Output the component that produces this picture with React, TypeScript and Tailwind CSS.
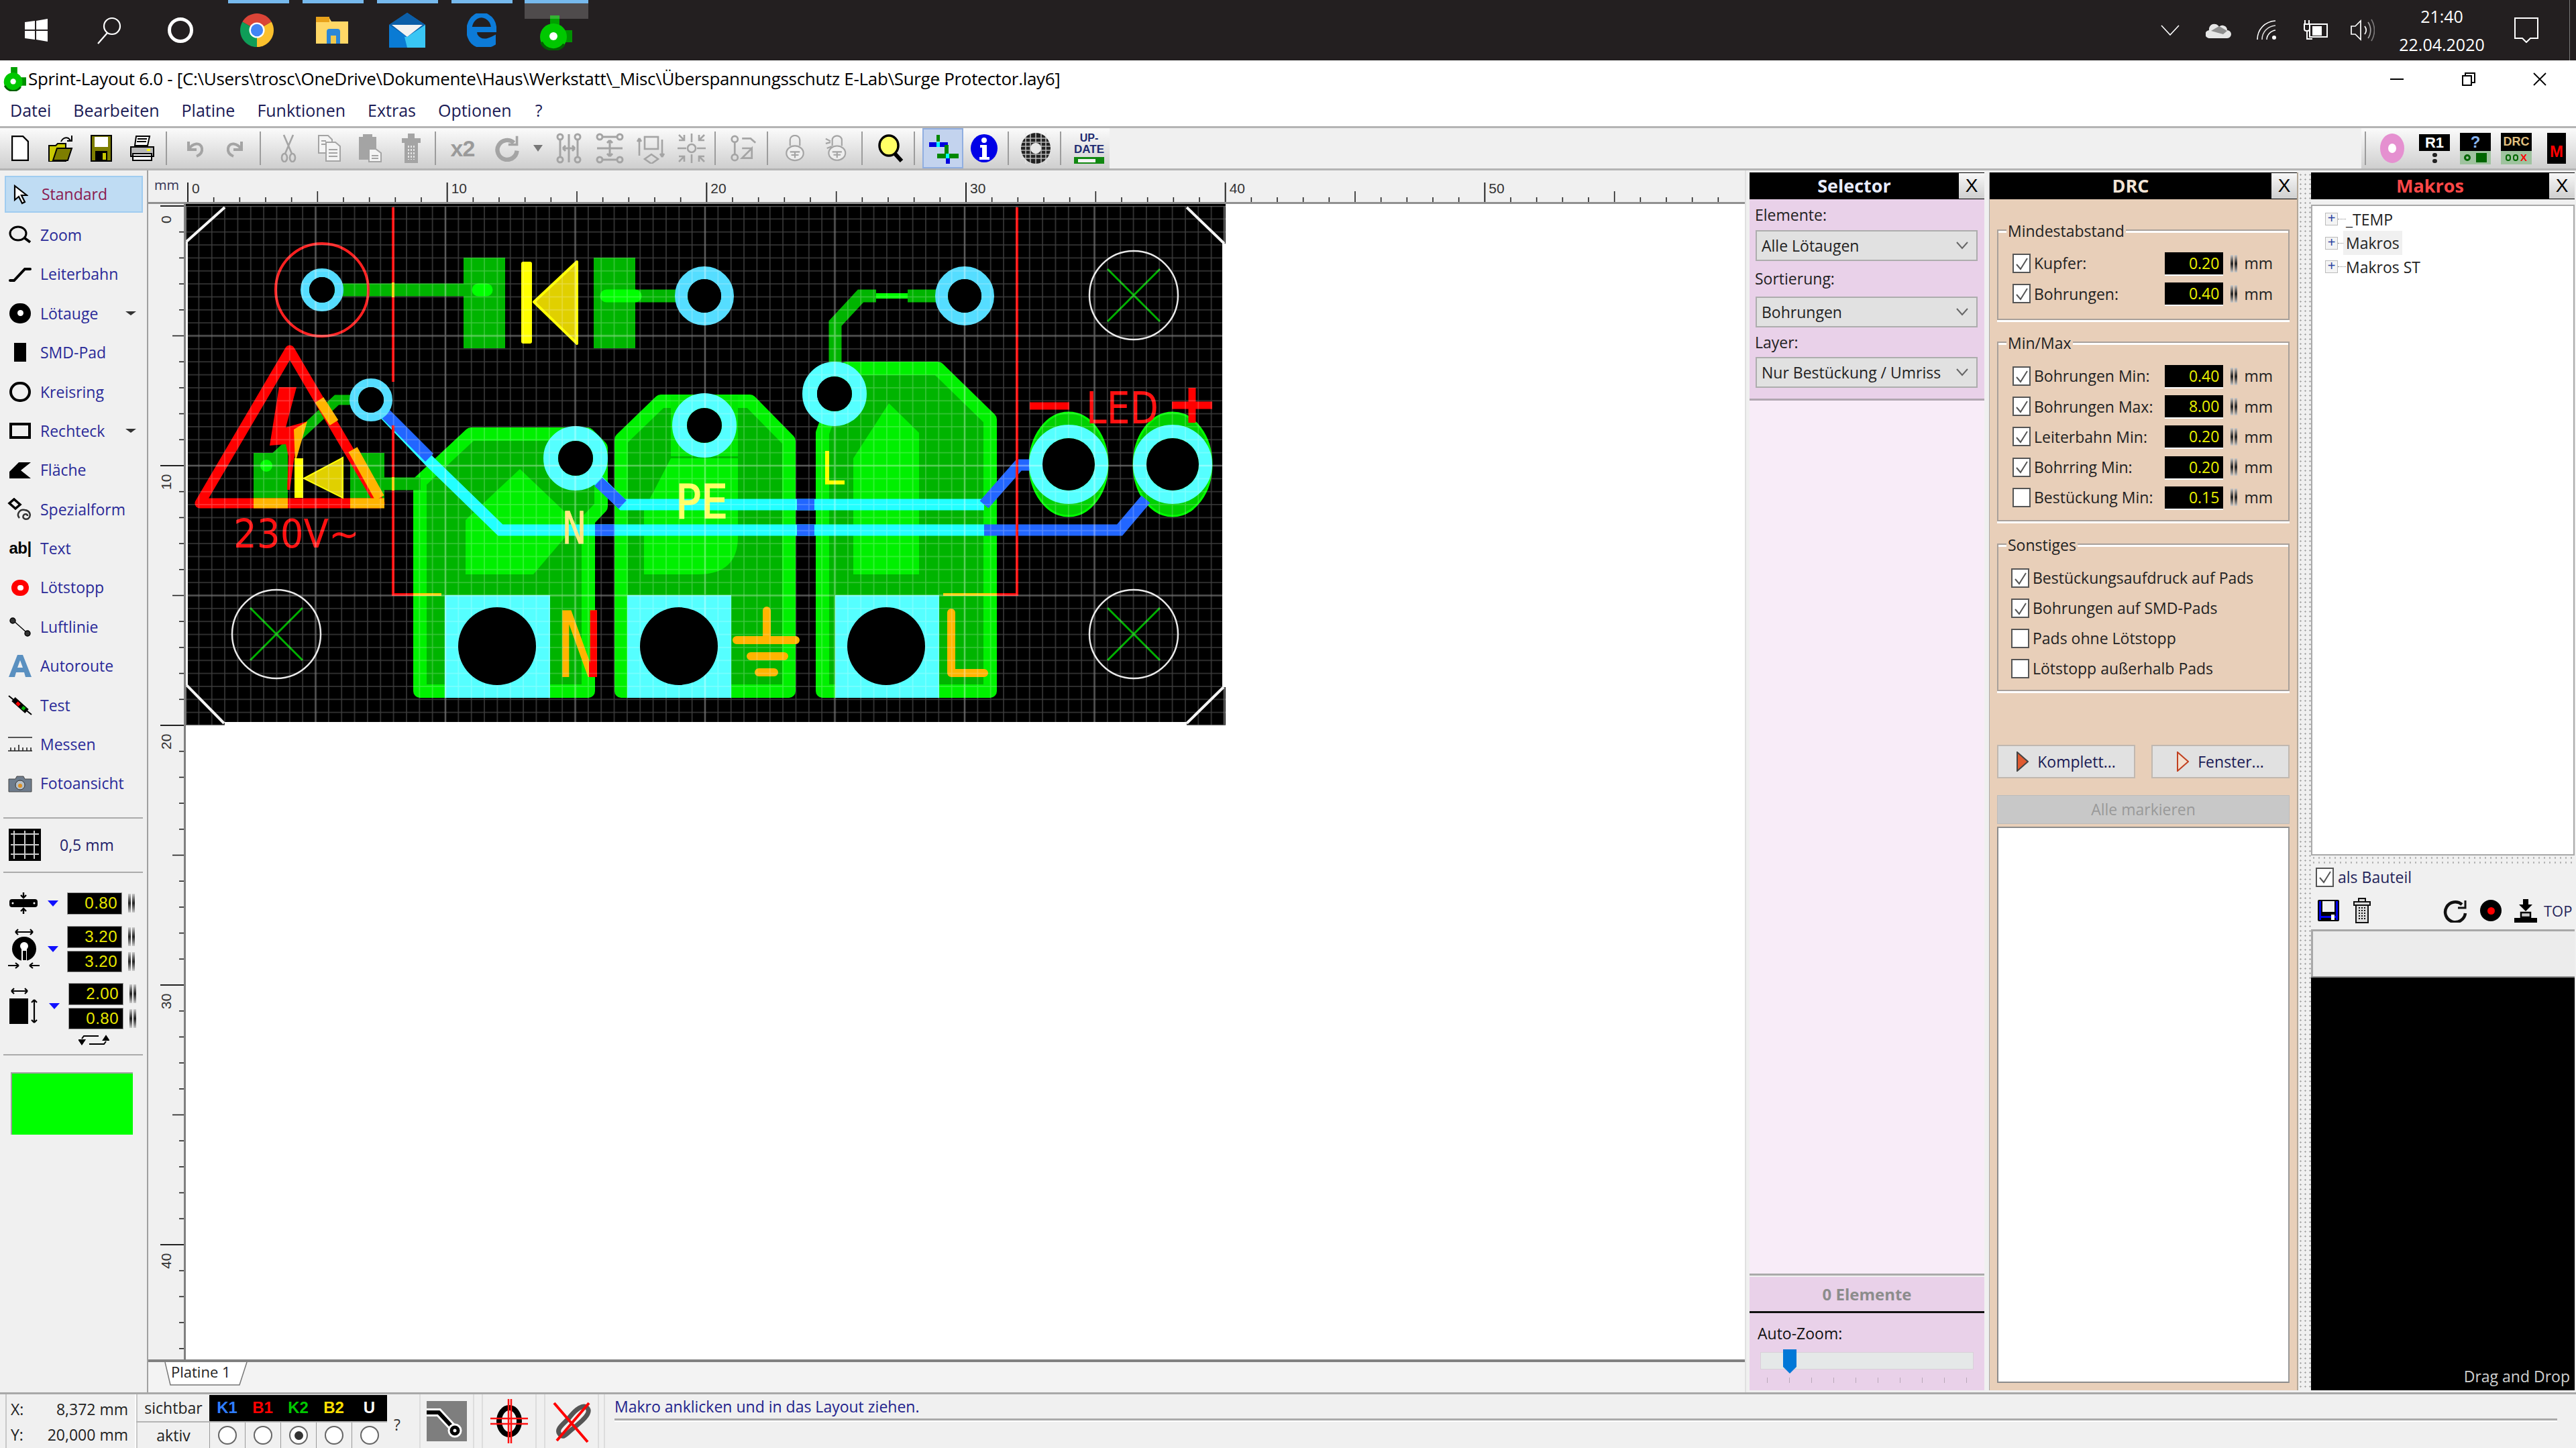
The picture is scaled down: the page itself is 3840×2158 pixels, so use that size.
import React from "react";

const ticksX = Array.from({ length: 60 }, (_, i) => i);
const ticksY = Array.from({ length: 45 }, (_, i) => i);
const MM = 38.7;

function Logo({ cls }: { cls: string }) {
  return (
    <svg viewBox="0 0 52 52" className={cls}>
      <rect x="19" y="0" width="14" height="16" fill="#00a000" />
      <rect x="36" y="22" width="16" height="18" fill="#009000" />
      <circle cx="24" cy="32" r="20" fill="#00c800" />
      <path d="M6 40a20 20 0 0 0 34 3" fill="none" stroke="#006000" strokeWidth="4" />
      <circle cx="24" cy="31" r="6" fill="#fff" />
    </svg>
  );
}

function Taskbar() {
  return (
    <div className="h-[90px] shrink-0 bg-[#231f20] flex items-center relative text-white">
      <div className="w-[108px] flex justify-center">
        <svg viewBox="0 0 34 34" className="w-[34px] h-[34px]" fill="#fff">
          <path d="M0 5l15-2v13H0zM17 3l17-3v16H17zM0 18h15v13L0 29zM17 18h17v16l-17-3z" />
        </svg>
      </div>
      <div className="w-[107px] flex justify-center">
        <svg viewBox="0 0 44 44" className="w-[44px] h-[44px]" fill="none" stroke="#fff" strokeWidth="2.2">
          <circle cx="27" cy="16" r="12" />
          <path d="M20 26L6 42" />
        </svg>
      </div>
      <div className="w-[108px] flex justify-center">
        <div className="w-[38px] h-[38px] rounded-full border-[5px] border-white" />
      </div>
      <div className="w-[113px] ml-[3px] flex justify-center">
        <svg viewBox="-26 -26 52 52" className="w-[50px] h-[50px]">
          <path d="M0 0L-22.5 -13A26 26 0 0 1 22.5 -13Z" fill="#db4437" />
          <path d="M0 0L22.5 -13A26 26 0 0 1 0 26Z" fill="#fbc02d" />
          <path d="M0 0L0 26A26 26 0 0 1 -22.5 -13Z" fill="#0f9d58" />
          <circle r="12" fill="#fff" />
          <circle r="9.5" fill="#4285f4" />
        </svg>
      </div>
      <div className="w-[112px] flex justify-center">
        <svg viewBox="0 0 48 40" className="w-[48px] h-[40px]">
          <path d="M0 2h20l3 5h25v33H0z" fill="#ffd766" />
          <path d="M0 0h20v8H0z" fill="#e8a21b" />
          <path d="M16 40V22a4 4 0 0 1 4-4h12a4 4 0 0 1 4 4v18h-6V28H22v12z" fill="#2b87d8" />
          <rect x="22" y="28" width="8" height="12" fill="#f2c94c" />
        </svg>
      </div>
      <div className="w-[111px] flex justify-center">
        <svg viewBox="0 0 54 52" className="w-[54px] h-[52px]">
          <path d="M0 18L27 0l27 18v34H0z" fill="#0a7bd4" />
          <path d="M0 18L27 0l27 18-27 18z" fill="#0b5ea8" />
          <path d="M4 18h46L27 36z" fill="#f2f2f2" />
          <path d="M54 52H27l-4-16 4 0 27-18z" fill="#39c6f4" />
        </svg>
      </div>
      <div className="w-[112px] flex justify-center">
        <svg viewBox="0 0 44 50" className="w-[44px] h-[50px]" fill="none">
          <path d="M6 24H40V20C38 6 24-2 13 5 4 11 1 24 5 35c5 14 22 16 34 9v-6c-10 5-21 5-27-5-1-3-1-6-1-9" stroke="#0c7bd8" strokeWidth="8" />
        </svg>
      </div>
      <div className="w-[105px] flex justify-center">
        <Logo cls="w-[52px] h-[52px] mt-[8px]" />
      </div>

      <div className="absolute left-[340px] top-0 w-[91px] h-[5px] bg-[#76b9ed]" />
      <div className="absolute left-[451px] top-0 w-[91px] h-[5px] bg-[#76b9ed]" />
      <div className="absolute left-[562px] top-0 w-[91px] h-[5px] bg-[#76b9ed]" />
      <div className="absolute left-[673px] top-0 w-[91px] h-[5px] bg-[#76b9ed]" />
      <div className="absolute left-[782px] top-0 w-[95px] h-[5px] bg-[#76b9ed]" />
      <div className="absolute left-[782px] top-[5px] w-[95px] h-[23px] bg-[#ffffff] opacity-20" />

      <div className="ml-auto flex items-center">
        <svg viewBox="0 0 28 16" className="w-[28px] h-[16px] mr-[39px]" fill="none" stroke="#fff" strokeWidth="1.6">
          <path d="M1 1l13 14L27 1" />
        </svg>
        <svg viewBox="0 0 38 24" className="w-[38px] h-[24px] mr-[38px]">
          <path d="M6 24a6 6 0 0 1-1-12 8 8 0 0 1 15-5 7 7 0 0 1 12 5 6 6 0 0 1 0 12z" fill="#e6e6e6" />
          <path d="M8 13L20 6l12 7-6 5z" fill="#8e8e8e" />
        </svg>
        <svg viewBox="0 0 30 30" className="w-[30px] h-[30px] mr-[40px]" fill="none" stroke="#fff" strokeWidth="1.6">
          <path d="M1 29C1 14 12 2 28 1" />
          <path d="M8 29C8 18 16 9 28 8" opacity=".85" />
          <path d="M15 29c0-7 6-13 13-14" />
          <circle cx="26" cy="26" r="3" fill="#fff" stroke="none" />
        </svg>
        <svg viewBox="0 0 36 30" className="w-[36px] h-[30px] mr-[34px]" fill="none" stroke="#fff" strokeWidth="2">
          <rect x="9" y="6" width="26" height="19" />
          <rect x="14" y="10" width="12" height="12" fill="#fff" />
          <path d="M2 0v6M8 0v6M1 6h8v7a3 3 0 0 1-3 3H4a3 3 0 0 1-3-3zM5 16v12h8" />
        </svg>
        <svg viewBox="0 0 36 36" className="w-[36px] h-[36px] mr-[32px]" fill="none" stroke="#fff" strokeWidth="1.7">
          <path d="M1 12h6l8-8v28l-8-8H1z" />
          <path d="M21 12c3 4 3 8 0 12" />
          <path d="M26 6c5 7 5 17 0 24" opacity=".6" />
          <path d="M31 2c6 10 6 22 0 32" opacity=".4" />
        </svg>
        <div className="w-[136px] flex flex-col items-center text-[25px] leading-[42px] font-['Open_Sans',sans-serif]">
          <span>21:40</span>
          <span>22.04.2020</span>
        </div>
        <svg viewBox="0 0 36 38" className="w-[36px] h-[38px] ml-[40px] mr-[56px]" fill="none" stroke="#fff" strokeWidth="2">
          <path d="M1 1h34v30H24l-6 6-6-6H1z" />
        </svg>
      </div>
      <div className="absolute right-[9px] top-0 bottom-0 w-px bg-[#777]" />
    </div>
  );
}

function TitleBar() {
  return (
    <div className="h-[55px] shrink-0 bg-white flex items-center relative">
      <Logo cls="w-[36px] h-[36px] ml-[3px] mr-[3px]" />
      <span className="text-[26px] text-black whitespace-nowrap font-['Open_Sans',sans-serif] tracking-[-0.31px]">
        Sprint-Layout 6.0 - [C:\Users\trosc\OneDrive\Dokumente\Haus\Werkstatt\_Misc\Überspannungsschutz E-Lab\Surge Protector.lay6]
      </span>
      <div className="ml-auto flex items-center">
        <div className="w-[20px] h-[2px] bg-black mr-[87px]" />
        <svg viewBox="0 0 20 20" className="w-[20px] h-[20px] mr-[86px]" fill="none" stroke="#000" strokeWidth="2">
          <rect x="1" y="5" width="13" height="14" />
          <path d="M5 5V1h14v14h-5" />
        </svg>
        <svg viewBox="0 0 20 20" className="w-[20px] h-[20px] mr-[44px]" fill="none" stroke="#000" strokeWidth="1.8">
          <path d="M1 1l18 18M19 1L1 19" />
        </svg>
      </div>
    </div>
  );
}

function MenuBar() {
  const items: [string, string][] = [
    ["Datei", "ml-[15px]"],
    ["Bearbeiten", "ml-[33px]"],
    ["Platine", "ml-[33px]"],
    ["Funktionen", "ml-[33px]"],
    ["Extras", "ml-[33px]"],
    ["Optionen", "ml-[33px]"],
    ["?", "ml-[35px]"],
  ];
  return (
    <div className="h-[43px] shrink-0 bg-white flex items-center pb-[3px] text-[25px] text-[#1a1a55] font-['Open_Sans',sans-serif]">
      {items.map(([t, c]) => (
        <span key={t} className={c}>
          {t}
        </span>
      ))}
    </div>
  );
}

const Sep = ({ cls }: { cls: string }) => <div className={"w-[2px] h-[50px] bg-[#9c9c9c] shrink-0 " + cls} />;

function Cell({ children, cls = "w-[61px]" }: { children: React.ReactNode; cls?: string }) {
  return <div className={"h-full shrink-0 flex items-center justify-center " + cls}>{children}</div>;
}

const GRAY = "#a4a4a4";

function Toolbar() {
  return (
    <div className="h-[66px] shrink-0 bg-[#f0f0f0] border-y-[3px] border-y-[#b4b4b4] flex items-center">
      <div className="h-full flex items-center bg-linear-to-b from-[#fbfbfb] to-[#cfcfcf]">
        <Cell cls="w-[59px]">
          <svg viewBox="0 0 26 38" className="w-[26px] h-[38px]" fill="#fff" stroke="#000" strokeWidth="2.4">
            <path d="M1 1h16l8 8v28H1z" />
          </svg>
        </Cell>
        <Cell>
          <svg viewBox="0 0 38 40" className="w-[38px] h-[40px]">
            <path d="M2 16h10l3-3h12v27H2z" fill="#c8c800" stroke="#000" strokeWidth="2" />
            <path d="M8 38l6-18h22l-6 18z" fill="#7e7e00" stroke="#000" strokeWidth="2" />
            <path d="M20 10c2-5 7-7 11-5l3 3M36 1v8h-7" fill="none" stroke="#000" strokeWidth="2" />
          </svg>
        </Cell>
        <Cell>
          <svg viewBox="0 0 32 40" className="w-[32px] h-[40px]">
            <rect x="1" y="1" width="30" height="38" fill="#7e7e00" stroke="#000" strokeWidth="2" />
            <rect x="6" y="3" width="20" height="15" fill="#fff" />
            <rect x="7" y="24" width="18" height="15" fill="#000" />
            <rect x="18" y="27" width="5" height="10" fill="#c8c800" />
          </svg>
        </Cell>
        <Cell>
          <svg viewBox="0 0 38 40" className="w-[38px] h-[40px]" stroke="#000" strokeWidth="2">
            <path d="M10 2h20l-3 14H8z" fill="#fff" />
            <path d="M12 6h14M11 10h14" />
            <path d="M2 18h34v14H2z" fill="#b8b8b8" />
            <rect x="5" y="28" width="28" height="10" fill="#fff" />
            <path d="M5 32h28" />
            <rect x="26" y="21" width="5" height="3" fill="#ff0" stroke="none" />
          </svg>
        </Cell>
        <Sep cls="ml-[5px] mr-[10px]" />
        <Cell>
          <svg viewBox="0 0 30 30" className="w-[30px] h-[30px]" fill="none" stroke={GRAY} strokeWidth="4">
            <path d="M6 5v12h12M6 17C12 7 24 5 26 15c1 6-3 10-8 12" />
          </svg>
        </Cell>
        <Cell>
          <svg viewBox="0 0 30 30" className="w-[30px] h-[30px]" fill="none" stroke={GRAY} strokeWidth="4">
            <path d="M24 5v12H12M24 17C18 7 6 5 4 15c-1 6 3 10 8 12" />
          </svg>
        </Cell>
        <Sep cls="ml-[6px] mr-[10px]" />
        <Cell>
          <svg viewBox="0 0 24 42" className="w-[24px] h-[42px]" fill="none" stroke={GRAY} strokeWidth="2.6">
            <path d="M5 1l12 28M19 1L7 29" />
            <ellipse cx="6" cy="35" rx="4" ry="6" />
            <ellipse cx="18" cy="35" rx="4" ry="6" />
          </svg>
        </Cell>
        <Cell>
          <svg viewBox="0 0 34 40" className="w-[34px] h-[40px]" fill="#f4f4f4" stroke={GRAY} strokeWidth="2">
            <path d="M1 1h14l6 6v20H1z" />
            <path d="M12 11h14l7 6v22H12z" />
            <path d="M16 22h13M16 27h13M16 32h13M5 9h7M5 14h6" />
          </svg>
        </Cell>
        <Cell>
          <svg viewBox="0 0 36 42" className="w-[36px] h-[42px]" stroke={GRAY} strokeWidth="2">
            <path d="M2 5h24v32H2z" fill={GRAY} />
            <path d="M8 1h12v7H8z" fill={GRAY} />
            <path d="M16 22h10l8 6v13H16z" fill="#f4f4f4" />
            <path d="M20 32h10M20 36h10" />
          </svg>
        </Cell>
        <Cell>
          <svg viewBox="0 0 28 44" className="w-[28px] h-[44px]" fill={GRAY} stroke={GRAY} strokeWidth="2">
            <path d="M10 1h8v5h-8zM1 8h26v5H1zM5 14h18v29H5z" />
            <path d="M10 18v21M14 18v21M18 18v21" stroke="#e4e4e4" strokeDasharray="3 2" />
          </svg>
        </Cell>
        <Sep cls="ml-[5px] mr-[9px]" />
        <Cell>
          <span className="text-[34px] font-bold text-[#9a9a9a] font-['Liberation_Sans',sans-serif] tracking-[-1px]">x2</span>
        </Cell>
        <Cell cls="w-[72px]">
          <svg viewBox="0 0 40 44" className="w-[38px] h-[40px]" fill="none" stroke={GRAY} strokeWidth="7">
            <path d="M31 13A16 16 0 1 0 36 26" />
            <path d="M36 2v14H22" strokeWidth="4" />
          </svg>
        </Cell>
        <Cell cls="w-[20px]">
          <div className="w-0 h-0 border-x-[7px] border-x-transparent border-t-[10px] border-t-[#777]" />
        </Cell>
        <Cell cls="w-[61px] ml-[5px]">
          <svg viewBox="0 0 42 46" className="w-[42px] h-[46px]" fill="none" stroke={GRAY} strokeWidth="3">
            <circle cx="8" cy="6" r="4" />
            <circle cx="8" cy="40" r="4" />
            <circle cx="34" cy="6" r="4" />
            <circle cx="34" cy="40" r="4" />
            <path d="M8 10v26M34 10v26M21 2v42M12 23h18M12 23l4-4M12 23l4 4M30 23l-4-4M30 23l-4 4" />
          </svg>
        </Cell>
        <Cell>
          <svg viewBox="0 0 42 46" className="w-[42px] h-[46px]" fill="none" stroke={GRAY} strokeWidth="3">
            <circle cx="6" cy="6" r="4" />
            <circle cx="36" cy="6" r="4" />
            <circle cx="6" cy="40" r="4" />
            <circle cx="36" cy="40" r="4" />
            <path d="M10 6h22M10 40h22M2 23h38M21 11v24M21 11l-4 4M21 11l4 4M21 35l-4-4M21 35l4-4" />
          </svg>
        </Cell>
        <Cell>
          <svg viewBox="0 0 42 46" className="w-[42px] h-[46px]" fill="none" stroke={GRAY} strokeWidth="2.6">
            <rect x="12" y="6" width="20" height="18" />
            <path d="M22 32l10 7-10 7-10-7zM4 8v26M4 8L1 13M4 8l3 5M38 10v26M38 36l-3-5M38 36l3-5" />
          </svg>
        </Cell>
        <Cell>
          <svg viewBox="0 0 44 46" className="w-[44px] h-[46px]" fill="none" stroke={GRAY} strokeWidth="2.6">
            <circle cx="22" cy="23" r="6" />
            <path d="M22 1v13M22 32v13M1 23h13M30 23h13M3 3l8 8M11 3v8H3M41 3l-8 8M33 3v8h8M3 43l8-8M11 43v-8H3M41 43l-8-8M33 43v-8h8" />
          </svg>
        </Cell>
        <Sep cls="ml-[4px] mr-[10px]" />
        <Cell>
          <svg viewBox="0 0 44 44" className="w-[40px] h-[40px]" fill="none" stroke={GRAY} strokeWidth="3">
            <circle cx="8" cy="7" r="5" />
            <circle cx="8" cy="37" r="5" />
            <path d="M8 12v20M20 22h16M36 22v16H20z" />
            <path d="M20 6h14l8 7" />
          </svg>
        </Cell>
        <Sep cls="ml-[5px] mr-[9px]" />
        <Cell>
          <svg viewBox="0 0 32 44" className="w-[30px] h-[40px]" fill="none" stroke={GRAY} strokeWidth="2.4">
            <path d="M8 18V8a8 7 0 0 1 16 0v10" />
            <ellipse cx="16" cy="30" rx="14" ry="12" fill="#eee" />
            <path d="M8 28h16M16 28v10M10 33h12" />
          </svg>
        </Cell>
        <Cell>
          <svg viewBox="0 0 36 44" className="w-[32px] h-[40px]" fill="none" stroke={GRAY} strokeWidth="2.4">
            <path d="M12 18V8a8 7 0 0 1 16 0v10M1 6l8 4M1 14l8-2M3 22l8-3" />
            <ellipse cx="20" cy="30" rx="14" ry="12" fill="#eee" />
            <path d="M12 28h16M20 28v10M14 33h12" />
          </svg>
        </Cell>
        <Sep cls="ml-[8px] mr-[11px]" />
        <Cell>
          <svg viewBox="0 0 42 42" className="w-[42px] h-[42px]">
            <ellipse cx="18" cy="17" rx="14" ry="15" fill="#ffff66" stroke="#000" strokeWidth="3.5" />
            <path d="M27 29l10 11" stroke="#000" strokeWidth="6" />
          </svg>
        </Cell>
        <Sep cls="ml-[4px] mr-[11px]" />
      </div>
      <div className="h-full w-[61px] shrink-0 flex items-center justify-center bg-[#c3d3ee] border-2 border-[#90aee0]">
        <svg viewBox="0 0 46 46" className="w-[46px] h-[46px]">
          <rect x="13" y="3" width="5" height="10" fill="#008800" />
          <rect x="2" y="14" width="28" height="7" fill="#0000e0" />
          <rect x="25" y="18" width="6" height="14" fill="#008800" />
          <rect x="14" y="31" width="32" height="7" fill="#008800" />
          <rect x="27" y="38" width="6" height="8" fill="#0000e0" />
          <rect x="13" y="14" width="5" height="7" fill="#00ffff" />
          <rect x="27" y="31" width="5" height="7" fill="#00ffff" />
        </svg>
      </div>
      <div className="h-full flex items-center bg-linear-to-b from-[#fbfbfb] to-[#cfcfcf]">
        <Cell>
          <svg viewBox="0 0 42 44" className="w-[42px] h-[44px]">
            <ellipse cx="21" cy="22" rx="20" ry="21" fill="#0000e6" />
            <circle cx="21" cy="10" r="4" fill="#fff" />
            <path d="M15 17h10v18h4v4H14v-4h4V21h-3z" fill="#fff" />
          </svg>
        </Cell>
        <Sep cls="ml-[5px] mr-[9px]" />
        <Cell>
          <svg viewBox="0 0 46 46" className="w-[46px] h-[46px]">
            <ellipse cx="23" cy="23" rx="22" ry="23" fill="#222" />
            <circle cx="23" cy="23" r="8" fill="#e8e8e8" />
            <path d="M1 8h44M1 14h44M1 20h44M1 26h44M1 32h44M1 38h44M8 0v46M15 0v46M23 0v46M31 0v46M38 0v46" stroke="#e8e8e8" strokeWidth="1.6" opacity=".75" />
          </svg>
        </Cell>
        <Sep cls="ml-[6px] mr-[11px]" />
        <Cell>
          <div className="flex flex-col items-center w-[45px] h-[48px] relative">
            <span className="text-[16px] leading-[17px] font-bold text-[#1d2a70] font-['Liberation_Sans',sans-serif]">UP-</span>
            <span className="text-[17px] leading-[17px] font-bold text-[#1d2a70] font-['Liberation_Sans',sans-serif]">DATE</span>
            <div className="w-[45px] h-[10px] mt-[3px] bg-[#118811] flex items-center pl-[6px]">
              <div className="w-[26px] h-[5px] bg-[#f4f4f4]" />
            </div>
          </div>
        </Cell>
      </div>
      <div className="flex-1" />
      <div className="h-full w-[320px] shrink-0 flex items-center bg-linear-to-b from-[#fbfbfb] to-[#cfcfcf] pl-[5px]">
        <Sep cls="" />
        <div className="w-[37px] flex justify-center ml-[20px]">
          <svg viewBox="0 0 36 44" className="w-[36px] h-[44px]">
            <ellipse cx="18" cy="22" rx="18" ry="22" fill="#e590d0" />
            <ellipse cx="18" cy="22" rx="6" ry="7" fill="#fff" />
          </svg>
        </div>
        <div className="w-[46px] ml-[22px] flex flex-col items-center">
          <div className="w-[46px] h-[25px] bg-black text-white text-[22px] leading-[25px] text-center font-bold font-['Liberation_Sans',sans-serif]">R1</div>
          <div className="flex flex-col gap-[3px] mt-[3px]">
            <div className="w-[7px] h-[6px] rounded-full bg-[#222]" />
            <div className="w-[7px] h-[6px] rounded-full bg-[#222]" />
          </div>
        </div>
        <div className="w-[46px] ml-[15px] flex flex-col">
          <div className="h-[27px] bg-black text-[#8ab4ee] text-[24px] leading-[27px] text-center font-bold font-['Liberation_Sans',sans-serif]">?</div>
          <div className="h-[20px] bg-[#9fc39f] flex items-center justify-center gap-[8px]">
            <div className="w-[10px] h-[10px] rounded-full border-[3px] border-[#006600]" />
            <div className="w-[16px] h-[14px] bg-[#006600]" />
          </div>
        </div>
        <div className="w-[46px] ml-[15px] flex flex-col">
          <div className="h-[27px] bg-black text-[#e0c080] text-[18px] leading-[27px] text-center font-bold font-['Liberation_Sans',sans-serif]">DRC</div>
          <div className="h-[20px] bg-[#9fc39f] flex items-center justify-center gap-[3px]">
            <div className="w-[8px] h-[10px] rounded-full border-[2px] border-[#006600]" />
            <div className="w-[8px] h-[10px] rounded-full border-[2px] border-[#006600]" />
            <span className="text-[#ff0000] text-[15px] leading-[20px] font-bold font-['Liberation_Sans',sans-serif]">X</span>
          </div>
        </div>
        <div className="w-[28px] h-[46px] ml-[23px] bg-black text-[#ff0000] text-[24px] leading-[56px] text-center font-bold font-['Liberation_Sans',sans-serif]">M</div>
      </div>
    </div>
  );
}

function Side({ icon, label, caret, active }: { icon: React.ReactNode; label: string; caret?: boolean; active?: boolean }) {
  return (
    <div className={active ? "h-[55px] flex items-center bg-[#bfdcf3] border-2 border-[#a0ccf0] mb-[4px]" : "h-[58.4px] flex items-center"}>
      <div className={active ? "w-[51px] flex justify-center" : "w-[53px] pr-[7px] flex justify-center"}>{icon}</div>
      <span className={active ? "text-[23px] text-[#8a1a50] whitespace-nowrap ml-[2px]" : "text-[23px] text-[#2a2a98] whitespace-nowrap"}>{label}</span>
      {caret && <div className="ml-auto mr-[10px] w-0 h-0 border-x-[8px] border-x-transparent border-t-[6px] border-t-[#333]" />}
    </div>
  );
}

const InVal = ({ v, cls = "w-[82px] h-[33px]" }: { v: string; cls?: string }) => (
  <div className={"bg-black border border-[#999] text-[#e8e800] text-[24px] leading-[30px] text-right pr-[6px] tracking-[0.5px] font-['Liberation_Sans',sans-serif] " + cls}>{v}</div>
);
const Grip = ({ cls = "w-[12px] h-[28px]" }: { cls?: string }) => (
  <div className={"flex gap-[2px] justify-center " + cls}>
    <div className="w-[4px] h-full bg-linear-to-b from-[#ccc] via-[#222] to-[#ccc]" />
    <div className="w-[4px] h-full bg-linear-to-b from-[#ccc] via-[#222] to-[#ccc]" />
  </div>
);
const BlueCaret = () => <div className="w-0 h-0 border-x-[8px] border-x-transparent border-t-[9px] border-t-[#1010ff]" />;

function Sidebar() {
  return (
    <div className="w-[221px] shrink-0 border-r-2 border-r-[#a0a0a0] bg-[#f0f0f0] pl-[7px] pr-[6px] pt-[8px] flex flex-col font-['Open_Sans',sans-serif]">
      <Side active label="Standard" icon={
        <svg viewBox="0 0 22 30" className="w-[22px] h-[30px] mr-[8px]" fill="#fff" stroke="#000" strokeWidth="2.2"><path d="M2 2v21l6-5 5 10 4-2-5-10h8z" /></svg>
      } />
      <Side label="Zoom" icon={
        <svg viewBox="0 0 34 28" className="w-[34px] h-[28px]" fill="#eee" stroke="#000" strokeWidth="3"><ellipse cx="14" cy="12" rx="12" ry="10" /><path d="M24 19l8 6" strokeWidth="4" /></svg>
      } />
      <Side label="Leiterbahn" icon={
        <svg viewBox="0 0 34 24" className="w-[34px] h-[24px]" fill="none" stroke="#000" strokeWidth="4" strokeLinecap="round"><path d="M2 21h6L24 4h8" /></svg>
      } />
      <Side caret label="Lötauge" icon={<div className="w-[32px] h-[30px] shrink-0 rounded-full bg-black flex items-center justify-center"><div className="w-[9px] h-[9px] rounded-full bg-white" /></div>} />
      <Side label="SMD-Pad" icon={<div className="w-[18px] h-[28px] bg-black" />} />
      <Side label="Kreisring" icon={<div className="w-[32px] h-[30px] shrink-0 rounded-full border-[4px] border-black" />} />
      <Side caret label="Rechteck" icon={<div className="w-[32px] h-[24px] shrink-0 border-[4px] border-black" />} />
      <Side label="Fläche" icon={
        <svg viewBox="0 0 32 24" className="w-[32px] h-[24px]"><path d="M0 24V14L14 0h18L17 12l15 12z" fill="#000" /></svg>
      } />
      <Side label="Spezialform" icon={
        <svg viewBox="0 0 38 34" className="w-[38px] h-[34px] shrink-0" fill="none" stroke="#333" strokeWidth="2.5"><path d="M10 2l9 8-7 6-9-8z" strokeWidth="3.5" stroke="#000" /><path d="M18 30c-5-5 0-14 8-12 8 1 10 9 5 13-5 2-9-1-7-5 2-3 6-2 6 1" /></svg>
      } />
      <Side label="Text" icon={<span className="text-[24px] font-bold text-black font-['Liberation_Sans',sans-serif] tracking-[-0.5px] whitespace-nowrap">ab|</span>} />
      <Side label="Lötstopp" icon={<div className="w-[26px] h-[24px] rounded-full bg-[#ff0000] flex items-center justify-center"><div className="w-[9px] h-[8px] rounded-full bg-white" /></div>} />
      <Side label="Luftlinie" icon={
        <svg viewBox="0 0 34 30" className="w-[34px] h-[30px]" fill="#333" stroke="#000" strokeWidth="1.4"><path d="M7 6l20 18" /><circle cx="6" cy="6" r="4" /><circle cx="28" cy="25" r="4" /></svg>
      } />
      <Side label="Autoroute" icon={
        <svg viewBox="0 0 36 36" className="w-[36px] h-[36px] shrink-0"><path d="M1 35L14 2h8l13 33h-9l-2-7H12l-2 7zM14 21h8l-4-11z" fill="#5a90c0" fillRule="evenodd" /></svg>
      } />
      <Side label="Test" icon={
        <svg viewBox="0 0 36 30" className="w-[36px] h-[30px] shrink-0" fill="none"><path d="M1 1l34 28" stroke="#000" strokeWidth="2" /><path d="M8 6l20 18" stroke="#000" strokeWidth="8" /><path d="M13 11l4 4" stroke="#ff0000" strokeWidth="5" /><path d="M21 18l4 3" stroke="#00b000" strokeWidth="5" /></svg>
      } />
      <Side label="Messen" icon={
        <svg viewBox="0 0 36 24" className="w-[36px] h-[24px] shrink-0" stroke="#222" strokeWidth="1.6" fill="none"><path d="M0 2h36M0 22h36M4 22v-5M10 22v-5M16 22v-9M22 22v-5M28 22v-5M34 22v-5" /></svg>
      } />
      <Side label="Fotoansicht" icon={
        <svg viewBox="0 0 36 26" className="w-[36px] h-[26px] shrink-0"><path d="M1 6h10l2-4h10l2 4h10v19H1z" fill="#6e7c8c" stroke="#444" /><circle cx="18" cy="15" r="7" fill="#b6c0c8" stroke="#333" /><circle cx="18" cy="16" r="3" fill="#e09020" /></svg>
      } />

      <div className="h-[2px] bg-[#ababab] mt-[21px] -ml-[2px]" />
      <div className="h-[79px] flex items-center pl-[6px]">
        <svg viewBox="0 0 48 48" className="w-[48px] h-[48px]" stroke="#ccc" strokeWidth="2">
          <rect width="48" height="48" fill="#000" stroke="none" />
          <path d="M3 8h42M3 24h42M3 38h42M8 3v42M24 3v42M38 3v42" />
        </svg>
        <span className="ml-[28px] text-[23px] text-[#22226a] whitespace-nowrap">0,5 mm</span>
      </div>
      <div className="h-[2px] bg-[#ababab] -ml-[2px]" />

      <div className="flex items-center mt-[29px] h-[33px]">
        <svg viewBox="0 0 44 34" className="w-[44px] h-[34px] ml-[6px]">
          <rect x="1" y="11" width="42" height="12" rx="4" fill="#000" />
          <circle cx="6" cy="17" r="1.5" fill="#fff" />
          <circle cx="38" cy="17" r="1.5" fill="#fff" />
          <path d="M22 1v7M18 5l4 4 4-4M22 33v-7M18 29l4-4 4 4" stroke="#000" strokeWidth="2.4" fill="none" />
        </svg>
        <div className="ml-[14px] mr-[13px]"><BlueCaret /></div>
        <InVal v="0.80" />
        <div className="ml-[8px]"><Grip /></div>
      </div>
      <div className="flex items-center mt-[17px] h-[69px]">
        <svg viewBox="0 0 50 60" className="w-[50px] h-[60px] ml-[4px]">
          <path d="M12 5h26M12 5l4-4M12 5l4 4M38 5l-4-4M38 5l-4 4" stroke="#000" strokeWidth="2.2" fill="none" />
          <circle cx="25" cy="30" r="18" fill="#000" />
          <circle cx="25" cy="26" r="6" fill="#fff" />
          <rect x="21" y="28" width="8" height="20" fill="#fff" />
          <rect x="23" y="33" width="5" height="14" fill="#000" />
          <path d="M1 55h16M17 55l-5-4M17 55l-5 4M48 55H33M33 55l5-4M33 55l5 4" stroke="#000" strokeWidth="2.2" fill="none" />
        </svg>
        <div className="ml-[10px] mr-[13px]"><BlueCaret /></div>
        <div className="flex flex-col gap-[4px]">
          <InVal v="3.20" />
          <InVal v="3.20" cls="w-[82px] h-[32px]" />
        </div>
        <div className="flex flex-col gap-[9px] ml-[8px]"><Grip /><Grip /></div>
      </div>
      <div className="flex items-center mt-[16px] h-[69px]">
        <svg viewBox="0 0 48 56" className="w-[48px] h-[56px] ml-[6px]">
          <path d="M4 6h24M4 6l4-4M4 6l4 4M28 6l-4-4M28 6l-4 4" stroke="#000" strokeWidth="2.2" fill="none" />
          <rect x="1" y="17" width="28" height="38" fill="#000" />
          <path d="M38 19v34M38 19l-4 4M38 19l4 4M38 53l-4-4M38 53l4-4" stroke="#000" strokeWidth="2.2" fill="none" />
        </svg>
        <div className="ml-[12px] mr-[13px]"><BlueCaret /></div>
        <div className="flex flex-col gap-[4px]">
          <InVal v="2.00" />
          <InVal v="0.80" cls="w-[82px] h-[32px]" />
        </div>
        <div className="flex flex-col gap-[9px] ml-[8px]"><Grip /><Grip /></div>
      </div>
      <div className="flex justify-center pl-[59px] mt-[4px] h-[24px] items-center">
        <svg viewBox="0 0 46 16" className="w-[46px] h-[16px]" fill="none" stroke="#000" strokeWidth="2">
          <path d="M30 2H8L5 6M1 8l4 6 4-6zM16 14h22l3-4" />
          <path d="M37 8l4-6 4 6z" fill="#000" />
          <path d="M1 8l4 6 4-6z" fill="#000" />
        </svg>
      </div>
      <div className="h-[2px] bg-[#ababab] mt-[9px] -ml-[2px]" />
      <div className="w-[182px] h-[93px] ml-[9px] mt-[25px] bg-[#00ff00] border-l-2 border-t-2 border-[#a0a0a0]" />
    </div>
  );
}

function Rulers() {
  return (
    <div className="h-[50px] shrink-0 flex bg-[#f0f0f0] border-b-[3px] border-b-[#909090]">
      <div className="w-[56px] shrink-0 text-[20px] text-[#333355] pl-[9px] pt-[7px] font-['Open_Sans',sans-serif]">mm</div>
      <svg className="flex-1 h-full" viewBox="0 0 2326 47" preserveAspectRatio="xMinYMin" fontFamily="Liberation Sans, sans-serif">
        {ticksX.map((i) => {
          const x = 3 + i * MM;
          const major = i % 10 === 0;
          const mid = i % 5 === 0;
          return (
            <g key={i}>
              <line x1={x} x2={x} y1={major ? 18 : mid ? 31 : 40} y2={47} stroke="#222" strokeWidth={major ? 2 : 1.6} />
              {major && (
                <text x={x + 6} y={34} fontSize="21" fill="#333">
                  {i}
                </text>
              )}
            </g>
          );
        })}
      </svg>
    </div>
  );
}

function VRuler() {
  return (
    <div className="w-[56px] shrink-0 bg-[#f0f0f0] border-r-[3px] border-r-[#808080] h-full overflow-hidden">
      <svg viewBox="0 0 53 1726" className="w-[53px] h-[1726px]" fontFamily="Liberation Sans, sans-serif">
        {ticksY.map((i) => {
          const y = 3 + i * MM;
          const major = i % 10 === 0;
          const mid = i % 5 === 0;
          return (
            <g key={i}>
              <line x1={major ? 18 : mid ? 36 : 46} x2={53} y1={y} y2={y} stroke="#222" strokeWidth={major ? 2 : 1.6} />
              {major && (
                <text x={0} y={0} fontSize="21" fill="#333" transform={`translate(34 ${y + (i === 0 ? 26 : 36)}) rotate(-90)`}>
                  {i}
                </text>
              )}
            </g>
          );
        })}
      </svg>
    </div>
  );
}

const Via = ({ x, y, r, h, c = "#55ddff" }: { x: number; y: number; r: number; h: number; c?: string }) => (
  <circle cx={x} cy={y} r={(r + h) / 2} fill="none" stroke={c} strokeWidth={r - h} />
);

function Pcb() {
  const holes: [number, number, number][] = [
    [480, 432, 19], [553, 596, 19], [1050, 441, 25], [1438, 441, 25],
    [1244, 587, 26], [858, 683, 26], [1050, 634, 26], [1593, 692, 39], [1748, 692, 39],
    [741, 963, 58], [1012, 963, 58], [1321, 963, 58],
  ];
  return (
    <svg viewBox="277 304 1560 790" className="w-[1560px] h-[790px] block" fontFamily="DejaVu Sans, sans-serif">
      <defs>
        <pattern id="gmin" patternUnits="userSpaceOnUse" x="267.325" y="297.325" width="19.35" height="19.35">
          <path d="M0 9.675H19.35M9.675 0V19.35" stroke="#fff" strokeOpacity=".24" strokeWidth="1.5" fill="none" />
        </pattern>
        <pattern id="gmaj" patternUnits="userSpaceOnUse" x="180.25" y="210.25" width="193.5" height="193.5">
          <path d="M0 96.75H193.5M96.75 0V193.5" stroke="#fff" strokeOpacity=".2" strokeWidth="3" fill="none" />
        </pattern>
        <clipPath id="nred"><rect x="878" y="900" width="30" height="120" /></clipPath>
      </defs>
      <rect x="277" y="304" width="1550" height="777" fill="#000" />

      <polyline points="1245,588 1245,482 1283,441 1306,441" fill="none" stroke="#00b400" strokeWidth="19" />
      <line x1="1306" y1="441" x2="1353" y2="441" stroke="#00ff00" strokeWidth="8" />
      <line x1="1353" y1="441" x2="1438" y2="441" stroke="#00b400" strokeWidth="19" />
      <line x1="480" y1="432" x2="713" y2="432" stroke="#00b400" strokeWidth="19" />
      <rect x="691" y="384" width="62" height="135" fill="#00b400" />
      <rect x="885" y="384" width="62" height="135" fill="#00b400" />
      <line x1="713" y1="432" x2="725" y2="432" stroke="#00ff00" strokeWidth="19" strokeLinecap="round" />
      <line x1="904" y1="441" x2="1050" y2="441" stroke="#00b400" strokeWidth="19" />
      <line x1="904" y1="441" x2="947" y2="441" stroke="#00ff00" strokeWidth="19" strokeLinecap="round" />

      <polygon points="626,718 702,647 876,647 896,667 896,755 877,775 877,1030 626,1030" fill="#00b400" stroke="#00f000" strokeWidth="20" strokeLinejoin="round" />
      <polygon points="926,655 985,598 1118,598 1176,657 1176,1030 926,1030" fill="#00b400" stroke="#00f000" strokeWidth="20" strokeLinejoin="round" />
      <polygon points="1226,645 1262,549 1398,549 1476,625 1476,1030 1226,1030" fill="#00b400" stroke="#00f000" strokeWidth="20" strokeLinejoin="round" />
      <polygon points="694,775 775,699 860,780 795,856 694,856" fill="#00f000" />
      <polygon points="1272,683 1325,601 1370,645 1370,856 1272,856" fill="#00f000" />
      <path d="M1000 683H1100V800Q1100 856 1040 856H960V760Z" fill="#00f000" />
      <rect x="1000" y="590" width="100" height="90" fill="#00e800" />

      <rect x="378" y="675" width="51" height="75" fill="#00b400" />
      <rect x="522" y="675" width="51" height="75" fill="#00b400" />
      <polyline points="553,596 502,596 397,694" fill="none" stroke="#00b400" strokeWidth="15" />
      <circle cx="397" cy="694" r="9" fill="#00ff00" />
      <line x1="573" y1="721" x2="627" y2="721" stroke="#00b400" strokeWidth="19" />

      <rect x="663" y="887" width="157" height="153" fill="#55ffff" />
      <rect x="935" y="887" width="155" height="153" fill="#55ffff" />
      <rect x="1245" y="887" width="155" height="153" fill="#55ffff" />

      <ellipse cx="1593" cy="692" rx="58" ry="77" fill="#00d000" stroke="#00ff00" strokeWidth="3" />
      <ellipse cx="1748" cy="692" rx="58" ry="77" fill="#00d000" stroke="#00ff00" strokeWidth="3" />

      <polyline points="553,596 640,687 746,790 1467,790" fill="none" stroke="#22ffff" strokeWidth="17" />
      <polyline points="1467,790 1669,790 1708,744" fill="none" stroke="#2266ff" strokeWidth="17" />
      <polyline points="570,612 640,682" fill="none" stroke="#2266ff" strokeWidth="17" />
      <line x1="887" y1="790" x2="916" y2="790" stroke="#2266ff" strokeWidth="17" />
      <line x1="1188" y1="790" x2="1214" y2="790" stroke="#2266ff" strokeWidth="17" />
      <polyline points="858,683 928,752 1467,752" fill="none" stroke="#22ffff" strokeWidth="17" />
      <polyline points="892,718 928,752" fill="none" stroke="#2266ff" strokeWidth="17" />
      <polyline points="1467,752 1519,693 1593,693" fill="none" stroke="#2266ff" strokeWidth="17" />
      <line x1="1188" y1="752" x2="1214" y2="752" stroke="#2266ff" strokeWidth="17" />

      <polyline points="586,309 586,569" fill="none" stroke="#ff0000" strokeWidth="4" />
      <polyline points="586,634 586,886 616,886" fill="none" stroke="#ff0000" strokeWidth="4" />
      <line x1="616" y1="886" x2="658" y2="886" stroke="#ffcc00" strokeWidth="4" />
      <polyline points="1516,309 1516,886 1486,886" fill="none" stroke="#ff0000" strokeWidth="4" />
      <line x1="1406" y1="886" x2="1486" y2="886" stroke="#ffcc00" strokeWidth="4" />
      <rect x="584" y="421" width="4" height="22" fill="#ffcc00" />
      <rect x="584" y="711" width="4" height="20" fill="#ffcc00" />

      <circle cx="480" cy="432" r="69" fill="none" stroke="#ff2020" strokeWidth="4" />
      <Via x={480} y={432} r={32} h={19} />
      <Via x={553} y={596} r={32} h={19} />
      <Via x={1050} y={441} r={44} h={25} />
      <Via x={1438} y={441} r={44} h={25} />
      <Via x={1244} y={587} r={48} h={26} c="#55ffff" />
      <Via x={858} y={683} r={48} h={26} c="#55ffff" />
      <Via x={1050} y={634} r={48} h={26} c="#55ffff" />
      <Via x={1593} y={692} r={59} h={39} c="#55ffff" />
      <Via x={1748} y={692} r={59} h={39} c="#55ffff" />

      <rect x="777" y="390" width="16" height="122" rx="3" fill="#ffff00" />
      <polygon points="796,450 860,390 860,512" fill="#e0d000" stroke="#ffff00" strokeWidth="4" strokeLinejoin="round" />

      <polygon points="432,522 298,750 566,750" fill="none" stroke="#ff0000" strokeWidth="15" strokeLinejoin="round" />
      <polyline points="378,750 429,750" stroke="#ffb400" strokeWidth="15" fill="none" />
      <polyline points="522,750 573,750" stroke="#ffb400" strokeWidth="15" fill="none" />
      <polyline points="526,670 566,742" stroke="#ffb400" strokeWidth="15" fill="none" />
      <polyline points="476,596 498,630" stroke="#ffb400" strokeWidth="15" fill="none" />
      <polygon points="416,577 442,577 426,637 458,628 440,672 432,730 428,730 430,680 426,662 402,664" fill="#ff0000" />
      <polygon points="438,640 458,628 440,690" fill="#ffb400" />
      <rect x="439" y="683" width="13" height="59" fill="#ffff00" />
      <polygon points="453,713 511,682 511,742" fill="#e0d000" stroke="#ffff00" strokeWidth="2" />

      <text x="348" y="816" fontSize="58" fill="#ff1010" textLength="188" lengthAdjust="spacingAndGlyphs">230V~</text>
      <text x="1619" y="631" fontSize="66" fill="#ff1010" textLength="108" lengthAdjust="spacingAndGlyphs">LED</text>
      <line x1="1535" y1="605" x2="1594" y2="605" stroke="#ff0000" strokeWidth="11" />
      <path d="M1747 604H1807M1777 578V630" stroke="#ff0000" strokeWidth="11" />

      <text x="1007" y="772" fontSize="70" fill="#ffff66" stroke="#ffff66" strokeWidth="1.5" textLength="78" lengthAdjust="spacingAndGlyphs">PE</text>
      <text x="838" y="810" fontSize="66" fill="#ffe880" stroke="#ffe880" strokeWidth="1" textLength="36" lengthAdjust="spacingAndGlyphs">N</text>
      <text x="830" y="1008" fontSize="134" fill="#ffb400" stroke="#ffb400" strokeWidth="2" textLength="68" lengthAdjust="spacingAndGlyphs">N</text>
      <text x="830" y="1008" fontSize="134" fill="#ff0000" stroke="#ff0000" strokeWidth="2" textLength="68" lengthAdjust="spacingAndGlyphs" clipPath="url(#nred)">N</text>
      <polyline points="1233,672 1233,719 1259,719" fill="none" stroke="#ffff00" strokeWidth="6" />
      <polyline points="1418,913 1418,1003 1467,1003" fill="none" stroke="#ffb400" strokeWidth="12" strokeLinecap="round" strokeLinejoin="round" />
      <path d="M1143 910V954M1098 954H1186M1119 978H1169M1131 1002H1154" stroke="#ffb400" strokeWidth="12" strokeLinecap="round" fill="none" />

      {[[412, 945], [1690, 440], [1690, 945]].map(([x, y]) => (
        <g key={x * y}>
          <circle cx={x} cy={y} r="66" fill="none" stroke="#e8e8e8" strokeWidth="2.5" />
          <path d={`M${x - 39} ${y - 39}L${x + 39} ${y + 39}M${x + 39} ${y - 39}L${x - 39} ${y + 39}`} stroke="#00b000" strokeWidth="3" />
        </g>
      ))}

      <rect x="277" y="307" width="1550" height="774" fill="url(#gmin)" />
      <rect x="277" y="307" width="1550" height="774" fill="url(#gmaj)" />

      {holes.map(([x, y, r]) => (
        <circle key={x + "-" + y} cx={x} cy={y} r={r} fill="#000" />
      ))}

      <path d="M1822 363V1024H1827V363zM335 1076H1769V1081H335z" fill="#fff" />
      <path d="M278 360L335 309M278 360V1021M278 1021L334 1078M1769 309L1825 363M1769 1078L1824 1024" fill="none" stroke="#f4f4f4" strokeWidth="4" />
    </svg>
  );
}

function Canvas() {
  return (
    <div className="flex-1 min-w-0 flex flex-col">
      <Rulers />
      <div className="flex-1 min-h-0 flex border-b-[4px] border-b-[#808080]">
        <VRuler />
        <div className="flex-1 bg-white overflow-hidden">
          <Pcb />
        </div>
      </div>
      <div className="h-[45px] shrink-0 bg-[#f3f3f3] flex pl-[24px] font-['Open_Sans',sans-serif]">
        <svg viewBox="0 0 124 36" className="w-[124px] h-[36px]" fontSize="22" fontFamily="Open Sans, sans-serif">
          <path d="M1 0L9 34H112L123 0" fill="#fff" stroke="#777" strokeWidth="1.5" />
          <text x="10" y="23" fill="#222">Platine 1</text>
        </svg>
      </div>
    </div>
  );
}

const Title = ({ t, cls }: { t: string; cls: string }) => (
  <div className="h-[40px] shrink-0 bg-black flex items-center">
    <span className={"flex-1 text-center text-[27px] font-bold " + cls}>{t}</span>
    <div className="w-[38px] h-[38px] bg-linear-to-b from-[#f8f8f8] to-[#cfcfcf] text-black text-[28px] leading-[38px] text-center font-['Liberation_Sans',sans-serif]">X</div>
  </div>
);

const Chevron = () => (
  <svg viewBox="0 0 18 12" className="w-[18px] h-[12px] ml-auto mr-[12px]" fill="none" stroke="#666" strokeWidth="2">
    <path d="M1 1l8 9 8-9" />
  </svg>
);

function Select({ t }: { t: string }) {
  return (
    <div className="w-[331px] h-[46px] ml-[9px] flex items-center pl-[7px] bg-[#e1e1e1] border-2 border-[#adadad] text-[23px] text-[#222] whitespace-nowrap">
      {t}
      <Chevron />
    </div>
  );
}

function SelectorPanel() {
  const ticks = [0, 1, 2, 3, 4, 5, 6, 7, 8, 9];
  return (
    <div className="w-[350px] shrink-0 flex flex-col">
      <Title t="Selector" cls="text-[#e8ecff]" />
      <div className="h-[300px] shrink-0 bg-[#e9d1e9] border-b-[3px] border-b-[#b0a6b0] flex flex-col">
        <div className="h-[46px] pl-[8px] text-[23px] text-[#222] flex items-end pb-[6px]">Elemente:</div>
        <Select t="Alle Lötaugen" />
        <div className="h-[53px] pl-[8px] text-[23px] text-[#222] flex items-center">Sortierung:</div>
        <Select t="Bohrungen" />
        <div className="h-[44px] pl-[8px] text-[23px] text-[#222] flex items-center">Layer:</div>
        <Select t="Nur Bestückung / Umriss" />
      </div>
      <div className="flex-1 bg-[#f8ecf8] border-b-[3px] border-b-[#aaa]" />
      <div className="h-[54px] shrink-0 mt-[2px] bg-[#e9d1e9] border-b-[3px] border-b-[#111] flex items-center justify-center text-[24px] font-bold text-[#8c8c8c]">0 Elemente</div>
      <div className="h-[115px] shrink-0 bg-[#e9d1e9] relative pt-[14px]">
        <div className="pl-[12px] text-[23px] text-[#111] leading-[32px]">Auto-Zoom:</div>
        <div className="mx-[16px] mt-[12px] h-[26px] bg-[#e5e8e8] border border-[#d8d0d8] relative">
          <svg viewBox="0 0 20 36" className="absolute left-[33px] -top-[5px] w-[20px] h-[36px]">
            <path d="M0 0h20v26l-10 10-10-10z" fill="#0078d7" />
          </svg>
        </div>
        <div className="mx-[26px] mt-[12px] flex justify-between">
          {ticks.map((t) => (
            <div key={t} className="w-px h-[8px] bg-[#b8a8b8]" />
          ))}
        </div>
      </div>
    </div>
  );
}

function Check({ on }: { on: boolean }) {
  return (
    <div className="w-[27px] h-[29px] shrink-0 bg-white border-2 border-[#555] flex items-center justify-center">
      {on && (
        <svg viewBox="0 0 20 20" className="w-[20px] h-[20px]" fill="none" stroke="#555" strokeWidth="2">
          <path d="M2 11l6 7L18 2" />
        </svg>
      )}
    </div>
  );
}

function DrcRow({ on, t, v }: { on: boolean; t: string; v: string }) {
  return (
    <div className="h-[45.2px] flex items-center pl-[21px]">
      <Check on={on} />
      <span className="ml-[5px] text-[23px] text-[#222] whitespace-nowrap">{t}</span>
      <div className="ml-auto w-[87px] h-[33px] bg-black shadow-[0_2px_0_#fff] text-[#e8f000] text-[23px] leading-[33px] text-right pr-[6px] font-['Open_Sans',sans-serif]">{v}</div>
      <div className="mx-[10px]"><Grip cls="w-[11px] h-[26px]" /></div>
      <span className="text-[23px] text-[#222] mr-[23px]">mm</span>
    </div>
  );
}

function Group({ title, cls, children }: { title: string; cls: string; children: React.ReactNode }) {
  return (
    <div className={"relative border-2 border-[#a8a09a] shadow-[0_3px_0_#fff,inset_0_3px_0_#fff] " + cls}>
      <span className="absolute left-[12px] -top-[15px] bg-[#e8cfb9] px-[2px] text-[23px] text-[#222] leading-[30px]">{title}</span>
      {children}
    </div>
  );
}

function CheckRow({ on, t }: { on: boolean; t: string }) {
  return (
    <div className="h-[45px] flex items-center pl-[19px]">
      <Check on={on} />
      <span className="ml-[5px] text-[23px] text-[#222] whitespace-nowrap">{t}</span>
    </div>
  );
}

function DrcPanel() {
  return (
    <div className="w-[460px] shrink-0 flex flex-col bg-[#e8cfb9] border-r-2 border-r-[#b4a898]">
      <Title t="DRC" cls="text-[#f2e4d6]" />
      <div className="flex-1 min-h-0 flex flex-col px-[11px] pt-[45px] pb-[11px]">
        <Group title="Mindestabstand" cls="h-[135px] pt-[26px] shrink-0">
          <DrcRow on t="Kupfer:" v="0.20" />
          <DrcRow on t="Bohrungen:" v="0.40" />
        </Group>
        <Group title="Min/Max" cls="h-[268px] mt-[32px] pt-[27px] shrink-0">
          <DrcRow on t="Bohrungen Min:" v="0.40" />
          <DrcRow on t="Bohrungen Max:" v="8.00" />
          <DrcRow on t="Leiterbahn Min:" v="0.20" />
          <DrcRow on t="Bohrring Min:" v="0.20" />
          <DrcRow on={false} t="Bestückung Min:" v="0.15" />
        </Group>
        <Group title="Sonstiges" cls="h-[220px] mt-[33px] pt-[27px] shrink-0">
          <CheckRow on t="Bestückungsaufdruck auf Pads" />
          <CheckRow on t="Bohrungen auf SMD-Pads" />
          <CheckRow on={false} t="Pads ohne Lötstopp" />
          <CheckRow on={false} t="Lötstopp außerhalb Pads" />
        </Group>
        <div className="flex justify-between mt-[80px] shrink-0">
          {["Komplett...", "Fenster..."].map((t, i) => (
            <div key={t} className="w-[206px] h-[50px] bg-[#e1e1e1] border-2 border-[#c0b8b0] flex items-center justify-center text-[23px] text-[#1a1a55]">
              <svg viewBox="0 0 18 30" className="w-[18px] h-[30px] mr-[13px]">
                <path d="M1 1l16 14L1 29z" fill={i === 0 ? "#e05a30" : "#f4e0d0"} stroke={i === 0 ? "#444" : "#c04020"} strokeWidth="2" />
              </svg>
              {t}
            </div>
          ))}
        </div>
        <div className="h-[43px] mt-[25px] shrink-0 bg-[#c8c8c8] border border-[#bcbcbc] flex items-center justify-center text-[23px] text-[#999]">Alle markieren</div>
        <div className="flex-1 mt-[4px] bg-white border-2 border-[#8c8c8c] border-r-[#999]" />
      </div>
    </div>
  );
}

function TreeItem({ t, hi }: { t: string; hi?: boolean }) {
  return (
    <div className="h-[35.5px] flex items-center">
      <div className="w-[19px] h-[19px] shrink-0 border border-[#bbb] bg-[#f4f4f4] text-[#2a3fa0] text-[20px] leading-[15px] text-center font-['Liberation_Sans',sans-serif]">+</div>
      <div className="w-[12px] shrink-0 border-t border-dotted border-[#888]" />
      <span className={hi ? "bg-[#f0f0f0] px-[4px] -ml-[4px] h-[36px] leading-[36px] text-[23px] text-[#222]" : "text-[23px] text-[#222]"}>{t}</span>
    </div>
  );
}

function MakrosPanel() {
  return (
    <div className="flex-1 min-w-0 flex flex-col pr-[2px]">
      <Title t="Makros" cls="text-[#ff4848]" />
      <div className="h-[8px] shrink-0" />
      <div className="h-[970px] shrink-0 bg-white border-2 border-[#a8a8a8] pl-[19px] pt-[2px]">
        <TreeItem t="_TEMP" />
        <TreeItem t="Makros" hi />
        <TreeItem t="Makros ST" />
      </div>
      <div className="h-[14px] shrink-0 bg-[radial-gradient(#b0b0b0_1.2px,transparent_1.4px)] bg-size-[8px_7px]" />
      <div className="h-[96px] shrink-0 bg-[#f0f0f0] flex flex-col">
        <div className="flex items-center pl-[7px] h-[30px] mt-[3px]">
          <Check on />
          <span className="ml-[6px] text-[23px] text-[#23235a]">als Bauteil</span>
        </div>
        <div className="flex items-center h-[42px] mt-[14px] relative">
          <svg viewBox="0 0 32 32" className="w-[32px] h-[32px] ml-[10px]">
            <rect width="32" height="32" rx="2" fill="#000" />
            <path d="M2 2h3v28H2zM27 2h3v28h-3zM5 24h22v3H5z" fill="#0000ee" />
            <rect x="7" y="2" width="18" height="16" fill="#f0f0f0" />
            <rect x="20" y="22" width="5" height="8" fill="#fff" />
          </svg>
          <svg viewBox="0 0 30 38" className="w-[30px] h-[38px] ml-[19px]" fill="#ddd" stroke="#111" strokeWidth="2">
            <path d="M10 1h10v5H10zM3 6h24v5H3zM6 11h18v26H6z" />
            <path d="M11 14v20M15 14v20M19 14v20" strokeDasharray="2 2" />
          </svg>
          <svg viewBox="0 0 36 36" className="w-[36px] h-[36px] ml-[106px]" fill="none" stroke="#111" strokeWidth="4.5">
            <path d="M28 9A15 15 0 1 0 33 22" />
            <path d="M33 3v11H22" strokeWidth="3" />
          </svg>
          <div className="w-[32px] h-[32px] ml-[19px] rounded-full bg-black flex items-center justify-center">
            <div className="w-[11px] h-[11px] rounded-full bg-[#ff0000]" />
          </div>
          <svg viewBox="0 0 36 36" className="w-[36px] h-[36px] ml-[18px]">
            <path d="M14 1h8v8h6L18 19 8 9h6z" fill="#000" />
            <rect x="11" y="21" width="14" height="7" fill="#ccc" stroke="#000" strokeWidth="2.5" />
            <rect x="1" y="29" width="34" height="7" fill="#000" />
          </svg>
          <span className="ml-[9px] text-[22px] text-[#23235a]">TOP</span>
        </div>
      </div>
      <div className="h-[70px] shrink-0 bg-[#ececec] border-l-[3px] border-t-[3px] border-[#a8a8a8]" />
      <div className="flex-1 bg-black relative border-t-[2px] border-t-[#888]">
        <span className="absolute right-[7px] bottom-[4px] text-[23px] text-[#cfcfcf]">Drag and Drop</span>
      </div>
    </div>
  );
}

const Dots = ({ cls }: { cls: string }) => (
  <div className={"shrink-0 bg-[#f0f0f0] bg-[radial-gradient(#aaa_1.1px,transparent_1.3px)] bg-size-[7px_7px] " + cls} />
);

function Panels() {
  return (
    <div className="w-[1239px] shrink-0 flex pt-[3px] pb-[3px] pl-[5px] bg-[#f0f0f0] border-l-2 border-l-[#e0e0e0] font-['Open_Sans',sans-serif]">
      <SelectorPanel />
      <div className="w-[8px] shrink-0 bg-[#f0f0f0] border-r border-r-[#aaa]" />
      <DrcPanel />
      <Dots cls="w-[19px]" />
      <MakrosPanel />
    </div>
  );
}

function StatusBar() {
  const layers: [string, string][] = [
    ["K1", "text-[#2f7dff]"],
    ["B1", "text-[#ff0000]"],
    ["K2", "text-[#00c800]"],
    ["B2", "text-[#ffe000]"],
    ["U", "text-[#ffffff]"],
  ];
  return (
    <div className="h-[83px] shrink-0 bg-[#f0f0f0] border-t-[3px] border-t-[#a8a8a8] flex font-['Open_Sans',sans-serif] text-[23px] text-[#222]">
      <div className="w-[195px] ml-[8px] pl-[6px] pr-[10px] border-l-2 border-l-[#c8c8c8] border-r-2 border-r-[#fff] flex flex-col whitespace-nowrap">
        <div className="h-[44px] flex items-center justify-between"><span>X:</span><span>8,372 mm</span></div>
        <div className="h-[32px] flex items-center justify-between"><span>Y:</span><span>20,000 mm</span></div>
      </div>
      <div className="w-[374px] shrink-0 flex flex-col">
        <div className="h-[40px] flex">
          <div className="w-[109px] border-l-2 border-l-[#c8c8c8] flex items-center justify-center">sichtbar</div>
          <div className="flex-1 bg-black flex mt-[1px] font-bold">
            {layers.map(([t, c]) => (
              <div key={t} className={"w-[53px] text-center leading-[38px] text-[24px] font-['Liberation_Sans',sans-serif] " + c}>{t}</div>
            ))}
          </div>
        </div>
        <div className="flex-1 flex border-t-2 border-t-[#b4b4b4]">
          <div className="w-[109px] border-l-2 border-l-[#c8c8c8] flex items-center justify-center">aktiv</div>
          {layers.map(([t], i) => (
            <div key={t} className="w-[53px] flex items-center justify-center border-l border-l-[#999]">
              <div className="w-[28px] h-[28px] rounded-full bg-white border-2 border-[#666] flex items-center justify-center">
                {i === 2 && <div className="w-[13px] h-[13px] rounded-full bg-[#333]" />}
              </div>
            </div>
          ))}
        </div>
      </div>
      <div className="w-[48px] shrink-0 flex items-center pl-[10px] text-[#333] pt-[10px]">?</div>
      <div className="w-[82px] shrink-0 border-x-2 border-x-[#ddd] flex items-center justify-center">
        <svg viewBox="0 0 60 60" className="w-[60px] h-[60px]" fill="none">
          <rect width="60" height="60" fill="#7e7e7e" />
          <path d="M0 17h18l26 28" stroke="#fff" strokeWidth="12" />
          <path d="M0 17h18l26 28" stroke="#000" strokeWidth="6" />
          <circle cx="42" cy="44" r="9" fill="#000" stroke="#fff" strokeWidth="3" />
          <circle cx="42" cy="44" r="2.5" fill="#fff" />
        </svg>
      </div>
      <div className="w-[82px] shrink-0 ml-[11px] border-x-2 border-x-[#ddd] flex items-center justify-center">
        <svg viewBox="0 0 60 66" className="w-[60px] h-[66px]" fill="none">
          <ellipse cx="30" cy="33" rx="15" ry="20" stroke="#000" strokeWidth="8" />
          <path d="M29 0v66M2 29h56M2 37h56" stroke="#ff1010" strokeWidth="2.5" />
          <path d="M33 0v66" stroke="#ff1010" strokeWidth="2.5" />
        </svg>
      </div>
      <div className="w-[82px] shrink-0 ml-[11px] border-x-2 border-x-[#ddd] flex items-center justify-center">
        <svg viewBox="0 0 64 66" className="w-[64px] h-[66px]" fill="none">
          <path d="M14 52C8 44 22 36 30 26S50 6 56 14 44 36 34 44 20 60 14 52z" stroke="#555" strokeWidth="7" />
          <path d="M6 6l50 58M58 6L10 62" stroke="#ff0000" strokeWidth="4" />
        </svg>
      </div>
      <div className="flex-1 ml-[7px] border-l-2 border-l-[#ddd] flex flex-col pl-[14px] pr-[28px]">
        <div className="h-[36px] flex items-center text-[#22228c]">Makro anklicken und in das Layout ziehen.</div>
        <div className="h-[3px] bg-[#aaa] shadow-[0_2px_0_#fff]" />
      </div>
    </div>
  );
}

export default function App() {
  return (
    <div className="w-[3840px] h-[2158px] flex flex-col overflow-hidden bg-[#f0f0f0]">
      <Taskbar />
      <TitleBar />
      <MenuBar />
      <Toolbar />
      <div className="flex-1 min-h-0 flex">
        <Sidebar />
        <Canvas />
        <Panels />
      </div>
      <StatusBar />
    </div>
  );
}
